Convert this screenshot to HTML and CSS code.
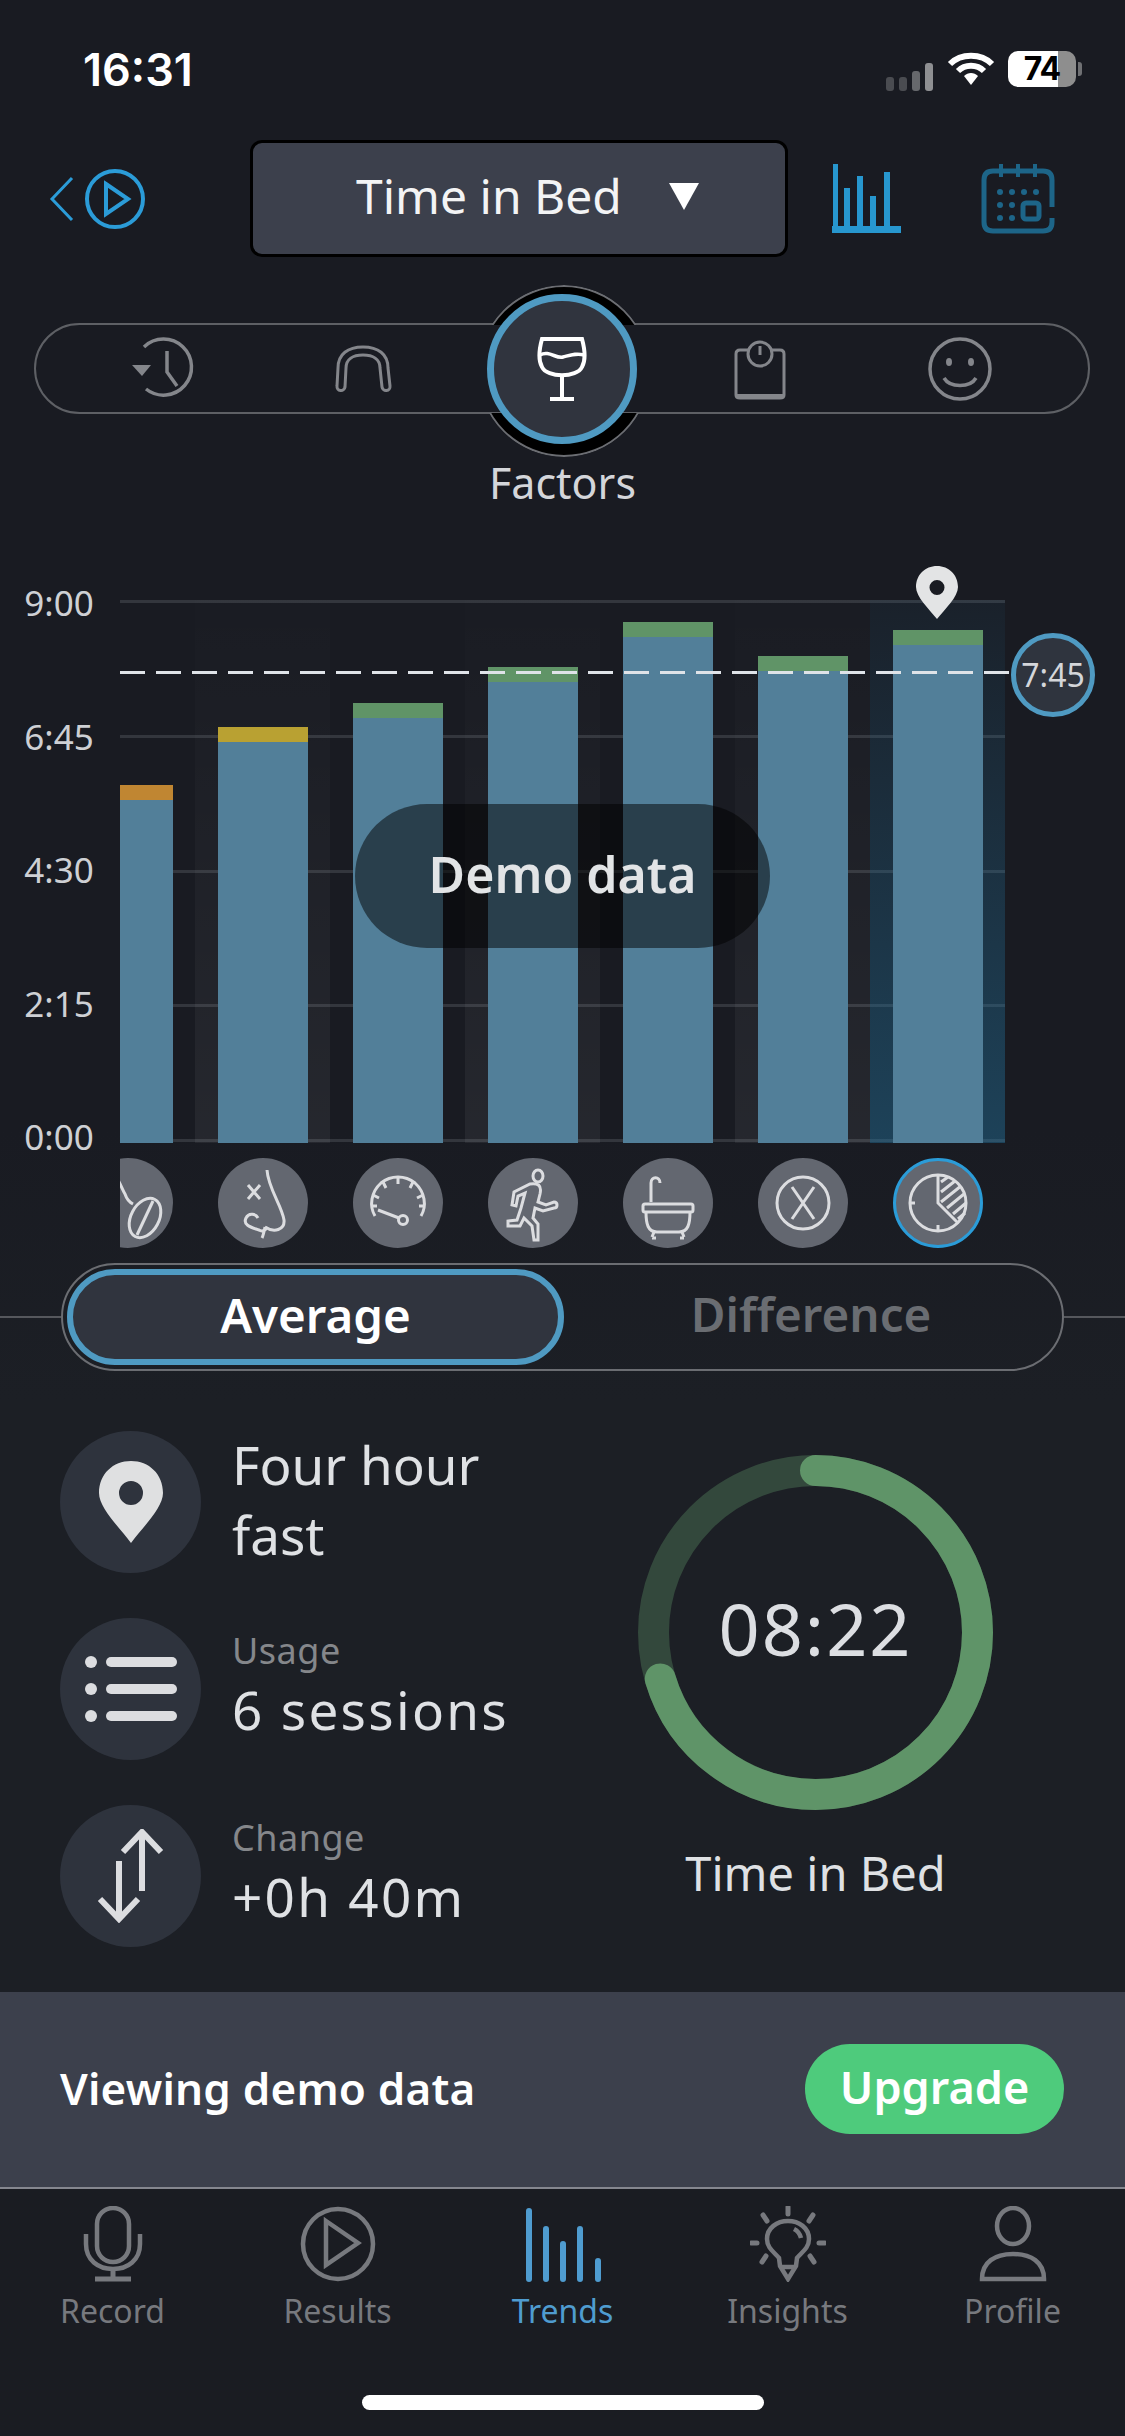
FILE: index.html
```html
<!DOCTYPE html>
<html lang="en">
<head>
  <meta charset="UTF-8" />
  <title>Trends - Time in Bed</title>
  <link rel="stylesheet" href="styles.css">
</head>
<body>
  <div class="status">
    <span class="clock">16:31</span>
    <div class="status-right">
      <div class="signal"><i></i><i></i><i></i><i></i></div>
      <svg class="wifi" width="48" height="36" viewBox="0 0 48 36"><path d="M3 13 C14 2 34 2 45 13 M11 20 C18 13 30 13 37 20" fill="none" stroke="#fff" stroke-width="6"/><path d="M17 25 C21 21 27 21 31 25 L24 34z" fill="#fff"/></svg>
      <div class="battery">74</div>
      <div class="nub"></div>
    </div>
  </div>

  <div class="topbar">
    <div class="back">
      <svg width="96" height="64" viewBox="0 0 96 64" fill="none" stroke="#2b9cd8" stroke-width="4"><path d="M23 11 L3 32 L23 53" stroke-width="3"/><circle cx="66" cy="32" r="28"/><path d="M57 17 L79 32 L57 47z"/></svg>
    </div>
    <div class="selector">Time in Bed<span class="caret"></span></div>
    <svg class="top-bars" width="70" height="70" viewBox="0 0 70 70" fill="#2797cf"><rect x="1" y="0" width="5" height="66"/><rect x="12" y="24" width="6" height="42"/><rect x="25" y="12" width="6" height="54"/><rect x="38" y="32" width="6" height="34"/><rect x="52" y="8" width="6" height="58"/><rect x="0" y="62" width="69" height="7"/></svg>
    <svg class="top-cal" width="74" height="72" viewBox="0 0 74 72" fill="none" stroke="#1d6588" stroke-width="5"><path d="M71 44 V17 Q71 8 62 8 H12 Q3 8 3 17 V59 Q3 68 12 68 H62 Q71 68 71 59 V55"/><path d="M20 1 V14 M37 1 V14 M54 1 V14" stroke-width="4"/><g fill="#1d6588" stroke="none"><circle cx="19" cy="29" r="3"/><circle cx="31" cy="29" r="3"/><circle cx="43" cy="29" r="3"/><circle cx="55" cy="29" r="3"/><circle cx="19" cy="42" r="3"/><circle cx="31" cy="42" r="3"/><circle cx="19" cy="55" r="3"/><circle cx="31" cy="55" r="3"/></g><rect x="42" y="40" width="16" height="16" rx="3" stroke-width="5"/></svg>
  </div>

  <div class="track">
    <div class="track-item item-history">
      <svg width="70" height="70" viewBox="0 0 70 70" fill="none" stroke="#84868b" stroke-width="3.5"><path d="M13 13 A28 28 0 1 1 15 55"/><path d="M36 17 V38 L46 52"/><path d="M1 31 H20 L11 42z" fill="#84868b" stroke="none"/></svg>
    </div>
    <div class="track-item item-guard">
      <svg width="60" height="50" viewBox="0 0 60 50" fill="none" stroke="#84868b" stroke-width="3"><path d="M4 42 L5 24 C5 10 15 3 30 3 C45 3 55 10 55 24 L57 42 A4 4 0 0 1 49 43 L47 24 C47 15 40 11 30 11 C20 11 13 15 13 24 L12 43 A4 4 0 0 1 4 42z"/></svg>
    </div>
    <div class="track-active">
      <div class="track-ring">
        <svg width="52" height="66" viewBox="0 0 52 66" fill="none" stroke="#fff" stroke-width="4"><path d="M6 3 H46 C49 14 50 24 46 31 C41 42 11 42 6 31 C2 24 3 14 6 3z"/><path d="M4 19 C13 14 20 23 27 21 C35 19 40 17 48 19" stroke-width="3.5"/><path d="M26 40 V62 M14 63 H38"/></svg>
      </div>
    </div>
    <div class="track-item item-scale">
      <svg width="54" height="62" viewBox="0 0 54 62" fill="none" stroke="#84868b" stroke-width="3"><path d="M16 12 H7 Q3 12 3 16 V57 Q3 60 7 60 H47 Q51 60 51 57 V16 Q51 12 47 12 H38"/><circle cx="27" cy="16" r="12"/><path d="M27 8 V17"/><path d="M3 58 H51" stroke-width="4"/></svg>
    </div>
    <div class="track-item item-mood">
      <svg width="66" height="66" viewBox="0 0 66 66" fill="none" stroke="#84868b" stroke-width="3.5"><circle cx="33" cy="33" r="30"/><ellipse cx="22" cy="26" rx="3" ry="4" fill="#84868b" stroke="none"/><ellipse cx="44" cy="26" rx="3" ry="4" fill="#84868b" stroke="none"/><path d="M17 42 C23 52 43 52 49 42"/></svg>
    </div>
  </div>
  <div class="track-label">Factors</div>

  <div class="chart">
    <div class="y-axis">
      <span>9:00</span><span>6:45</span><span>4:30</span><span>2:15</span><span>0:00</span>
    </div>
    <div class="plot">
      <div class="grid"><i></i><i></i><i></i><i></i><i></i></div>
      <div class="col col-first"><div class="bar" style="height:358px"><div class="cap cap-orange"></div></div></div>
      <div class="col col-shade"><div class="bar" style="height:416px"><div class="cap cap-yellow"></div></div></div>
      <div class="col"><div class="bar" style="height:440px"><div class="cap"></div></div></div>
      <div class="col col-shade"><div class="bar" style="height:476px"><div class="cap"></div></div></div>
      <div class="col"><div class="bar" style="height:521px"><div class="cap"></div></div></div>
      <div class="col col-shade"><div class="bar" style="height:487px"><div class="cap"></div></div></div>
      <div class="col col-selected"><div class="bar" style="height:513px"><div class="cap"></div></div></div>
    </div>
    <div class="avg-line"></div>
    <div class="avg-marker">7:45</div>
    <svg class="pin" width="44" height="54" viewBox="0 0 44 54"><path fill-rule="evenodd" d="M22 1 C34 1 43 10 43 22 C43 32 30 44 22 54 C14 44 1 32 1 22 C1 10 10 1 22 1z M22 15 A7.5 7.5 0 1 0 22 30 A7.5 7.5 0 1 0 22 15z" fill="#e3e4e5"/></svg>
    <div class="demo-pill">Demo data</div>
  </div>

  <div class="factor-row">
    <div class="factor-cell factor-first">
      <div class="factor">
        <svg width="90" height="90" viewBox="0 0 90 90" fill="none" stroke="#dcdde0" stroke-width="3"><path d="M26 14 C36 18 38 30 42 36 C44 42 46 44 50 46"/><ellipse cx="62" cy="60" rx="14" ry="21" transform="rotate(28 62 60)"/><path d="M54 77 L70 43"/></svg>
      </div>
    </div>
    <div class="factor-cell">
      <div class="factor">
        <svg width="90" height="90" viewBox="0 0 90 90" fill="none" stroke="#dcdde0" stroke-width="3"><path d="M49 12 C50 30 64 48 66 62 C67 72 56 75 47 69 C50 72 44 74 41 72 C36 70 24 68 28 60 C31 54 38 56 40 60 M47 69 C46 74 45 78 44 80"/><path d="M30 27 L42 41 M42 27 L30 41"/></svg>
      </div>
    </div>
    <div class="factor-cell">
      <div class="factor">
        <svg width="90" height="90" viewBox="0 0 90 90" fill="none" stroke="#dcdde0" stroke-width="3"><path d="M22 58 C16 48 18 34 28 25 C38 17 52 17 62 25 C72 34 74 48 68 58"/><path d="M45 19 V26 M30 24 L33 30 M60 24 L57 30 M20 37 L26 40 M70 37 L64 40 M18 48 L24 48 M72 48 L66 48 M25 52 L46 60"/><circle cx="50" cy="62" r="4.5"/></svg>
      </div>
    </div>
    <div class="factor-cell">
      <div class="factor">
        <svg width="90" height="90" viewBox="0 0 90 90" fill="none" stroke="#dcdde0" stroke-width="3"><ellipse cx="50" cy="18" rx="5" ry="6"/><path d="M42 26 C50 25 54 27 52 36 L50 44 L58 47 L66 44 C70 44 70 50 66 50 L55 53 L47 50 L45 60 L50 66 L50 82 L46 82 L44 68 L36 60 L32 68 L20 68 L20 63 L29 62 L33 50 L37 35 L30 38 L28 48 L24 47 L26 34z"/></svg>
      </div>
    </div>
    <div class="factor-cell">
      <div class="factor">
        <svg width="90" height="90" viewBox="0 0 90 90" fill="none" stroke="#dcdde0" stroke-width="3"><path d="M28 44 V25 C28 18 37 18 37 25"/><rect x="20" y="46" width="50" height="8" rx="2"/><path d="M23 54 C23 66 25 74 34 74 H56 C65 74 67 66 67 54"/><path d="M31 74 L29 79 M59 74 L61 79 M29 80 H33 M57 80 H61"/></svg>
      </div>
    </div>
    <div class="factor-cell">
      <div class="factor">
        <svg width="90" height="90" viewBox="0 0 90 90" fill="none" stroke="#dcdde0" stroke-width="3"><circle cx="45" cy="45" r="26"/><path d="M34 29 L56 61 M56 29 L34 61"/></svg>
      </div>
    </div>
    <div class="factor-cell">
      <div class="factor factor-on">
        <svg width="84" height="84" viewBox="0 0 84 84" fill="none" stroke="#dcdde0" stroke-width="3"><circle cx="42" cy="42" r="28"/><path d="M42 14 V42 L62 62"/><path d="M42 70 V64 M14 42 H19"/><path d="M45 21 L52 16 M45 31 L59 20 M45 41 L65 25 M51 47 L68 33 M57 53 L70 42 M62 58 L69 52" stroke-width="3"/></svg>
      </div>
    </div>
  </div>

  <div class="segment-row">
    <div class="rule"></div>
    <div class="segment">
      <div class="seg-on">Average</div>
      <div class="seg-off">Difference</div>
    </div>
    <div class="rule"></div>
  </div>

  <div class="stats">
    <div class="stat-list">
      <div class="stat">
        <div class="stat-icon">
          <svg width="66" height="84" viewBox="0 0 66 84"><path fill-rule="evenodd" d="M33 1 C51 1 65 14 65 33 C65 48 44 68 33 83 C22 68 1 48 1 33 C1 14 15 1 33 1z M33 21 A12 12 0 1 0 33 45 A12 12 0 1 0 33 21z" fill="#dfe0e1"/></svg>
        </div>
        <div class="stat-title">Four hour<br>fast</div>
      </div>
      <div class="stat">
        <div class="stat-icon">
          <svg width="92" height="72" viewBox="0 0 92 72" fill="#dcdde0"><circle cx="6" cy="9" r="6"/><circle cx="6" cy="36" r="6"/><circle cx="6" cy="63" r="6"/><rect x="21" y="4" width="71" height="10" rx="5"/><rect x="21" y="31" width="71" height="10" rx="5"/><rect x="21" y="58" width="71" height="10" rx="5"/></svg>
        </div>
        <div class="stat-text">
          <div class="stat-label">Usage</div>
          <div class="stat-value">6 sessions</div>
        </div>
      </div>
      <div class="stat">
        <div class="stat-icon">
          <svg width="70" height="94" viewBox="0 0 70 94" fill="none" stroke="#dcdde0" stroke-width="6"><path d="M46 62 V3 M27 23 L46 3 L65 23"/><path d="M23 32 V90 M4 70 L23 90 L42 70"/></svg>
        </div>
        <div class="stat-text">
          <div class="stat-label">Change</div>
          <div class="stat-value">+0h 40m</div>
        </div>
      </div>
    </div>
    <div class="ring-box">
      <div class="ring">
        <svg width="355" height="355" viewBox="0 0 355 355" fill="none" stroke-width="31"><circle cx="177.500" cy="177.500" r="162" stroke="#33483c"/><circle cx="177.500" cy="177.500" r="162" stroke="#5f9468" stroke-linecap="round" stroke-dasharray="716 1018" transform="rotate(-90 177.500 177.500)"/></svg>
        <div class="ring-value">08:22</div>
      </div>
      <div class="ring-label">Time in Bed</div>
    </div>
  </div>

  <div class="banner">
    <span class="banner-text">Viewing demo data</span>
    <div class="upgrade">Upgrade</div>
  </div>

  <div class="tabs">
    <div class="tab">
      <svg width="60" height="76" viewBox="0 0 60 76" fill="none" stroke="#77797e" stroke-width="4.5"><rect x="14" y="2" width="32" height="54" rx="16"/><path d="M3 28 V38 C3 54 15 63 30 63 C45 63 57 54 57 38 V28"/><path d="M30 63 V73 M12 73 H48" stroke-width="5"/></svg>
      <span>Record</span>
    </div>
    <div class="tab">
      <svg width="76" height="76" viewBox="0 0 76 76" fill="none" stroke="#77797e" stroke-width="4.5"><circle cx="38" cy="38" r="35"/><path d="M26 15 L58 37 L26 59z"/></svg>
      <span>Results</span>
    </div>
    <div class="tab tab-on">
      <svg width="76" height="76" viewBox="0 0 76 76" fill="#4f9cd0"><rect x="1" y="2" width="6" height="74" rx="3"/><rect x="18" y="20" width="6" height="56" rx="3"/><rect x="35" y="35" width="6" height="41" rx="3"/><rect x="52" y="20" width="6" height="56" rx="3"/><rect x="70" y="52" width="6" height="24" rx="3"/></svg>
      <span>Trends</span>
    </div>
    <div class="tab">
      <svg width="76" height="76" viewBox="0 0 76 76" fill="none" stroke="#77797e" stroke-width="4.500"><path d="M30 60 L29 52 C24 46 17 42 17 33 C17 22 27 15 38 15 C49 15 59 22 59 33 C59 42 52 46 47 52 L46 60 L38 73z"/><path d="M30 61 H46 M44 23 C48 25 50 28 51 32"/><path d="M38 1 V8 M13 9 L17 15 M63 9 L59 15 M1 37 H7 M69 37 H75 M12 56 L16 50 M64 56 L60 50" stroke-width="5" stroke-linecap="round"/></svg>
      <span>Insights</span>
    </div>
    <div class="tab">
      <svg width="68" height="76" viewBox="0 0 68 76" fill="none" stroke="#77797e" stroke-width="4.5"><ellipse cx="34" cy="20" rx="16" ry="18"/><path d="M3 73 C3 56 16 48 34 48 C52 48 65 56 65 73z"/></svg>
      <span>Profile</span>
    </div>
  </div>
  <div class="home-bar"></div>
</body>
</html>
```

FILE: styles.css
```css
* {
  box-sizing: border-box;
}

html, body {
  margin: 0;
  padding: 0;
}

body {
  width: 1125px;
  height: 2436px;
  overflow: hidden;
  background: linear-gradient(#191b22, #191b22 1130px, #1c1f25 1400px, #1c1f25 1992px, #1a1c22 2189px);
  font-family: "Noto Sans", Lato, sans-serif;
  color: #dcdee2;
}

/* status bar */
.status {
  height: 140px;
  display: flex;
  align-items: center;
  justify-content: space-between;
  padding: 0 43px 2px 83px;
}

.clock {
  font-family: Inter, sans-serif;
  font-size: 45px;
  font-weight: 600;
  color: #fff;
}

.status-right {
  display: flex;
  align-items: center;
}

.signal {
  display: flex;
  align-items: flex-end;
  gap: 5px;
  margin: 16px 14px 0 0;
}

.signal i {
  display: block;
  width: 8px;
  height: 14px;
  border-radius: 3px;
  background: #4a4c51;
}

.signal i:nth-child(3) {
  height: 20px;
  background: #66686c;
}

.signal i:nth-child(4) {
  height: 28px;
  background: #8e8f92;
}

.wifi {
  margin-right: 13px;
}

.battery {
  width: 68px;
  height: 36px;
  border-radius: 10px;
  background: linear-gradient(90deg, #fff 74%, #8e8e8e 74%);
  color: #000;
  font-family: Inter, sans-serif;
  font-size: 32px;
  font-weight: 700;
  line-height: 36px;
  text-align: center;
  letter-spacing: -1px;
}

.nub {
  width: 4px;
  height: 14px;
  margin-left: 2px;
  border-radius: 0 3px 3px 0;
  background: #6f7073;
}

/* top bar */
.topbar {
  height: 117px;
  display: flex;
  align-items: center;
  padding-left: 49px;
}

.back {
  width: 201px;
  display: flex;
}

.selector {
  width: 538px;
  height: 117px;
  border: 3px solid #000;
  border-radius: 12px;
  background: #3c404c;
  color: #f3f4f5;
  font-size: 48px;
  display: flex;
  align-items: center;
  justify-content: space-between;
  padding: 0 86px 6px 103px;
}

.caret {
  width: 0;
  height: 0;
  margin-top: 2px;
  border-left: 15px solid transparent;
  border-right: 15px solid transparent;
  border-top: 27px solid #fff;
}

.top-bars {
  margin-left: 44px;
}

.top-cal {
  margin-left: 79px;
}

/* factor picker */
.track {
  height: 91px;
  margin: 66px 35px 0 34px;
  padding-left: 95px;
  border: 2px solid #5e6065;
  border-radius: 46px;
  display: flex;
  align-items: center;
}

.track-item {
  display: flex;
  justify-content: center;
}

.item-history {
  width: 70px;
}

.item-guard {
  width: 60px;
  margin-left: 132px;
}

.item-scale {
  width: 54px;
  margin-left: 87px;
}

.item-mood {
  width: 66px;
  margin-left: 140px;
}

.track-active {
  position: relative;
  width: 168px;
  height: 168px;
  margin-left: 85px;
  display: flex;
  align-items: center;
  justify-content: center;
}

/* black caps of the selected circle, only seen outside the track */
.track-active::before {
  content: "";
  position: absolute;
  top: 0;
  left: 0;
  width: 168px;
  height: 168px;
  border: 2px solid #6b6d72;
  border-radius: 50%;
  background: #000;
  -webkit-mask-image: linear-gradient(#000 40px, transparent 40px, transparent 128px, #000 128px);
  mask-image: linear-gradient(#000 40px, transparent 40px, transparent 128px, #000 128px);
}

.track-ring {
  position: relative;
  width: 150px;
  height: 150px;
  border: 7px solid #4f9ac2;
  border-radius: 50%;
  background: #30343e;
  display: flex;
  align-items: center;
  justify-content: center;
}

.track-label {
  margin-top: 45px;
  height: 50px;
  line-height: 48px;
  font-size: 43px;
  text-align: center;
  color: #d4d6da;
}

/* chart */
.chart {
  position: relative;
  margin-top: 91px;
  display: flex;
}

.y-axis {
  width: 120px;
  height: 568px;
  margin: -14px 0 -11px;
  padding-right: 2px;
  display: flex;
  flex-direction: column;
  justify-content: space-between;
  font-size: 35px;
  line-height: 34px;
  text-align: center;
  color: #ced0d4;
}

.plot {
  position: relative;
  width: 885px;
  height: 543px;
  display: flex;
}

.grid {
  position: absolute;
  top: 0;
  left: 0;
  right: 0;
  bottom: 1px;
  display: flex;
  flex-direction: column;
  justify-content: space-between;
}

.grid i {
  display: block;
  height: 3px;
  background: #33363d;
}

.col {
  position: relative;
  width: 135px;
  display: flex;
  align-items: flex-end;
  justify-content: center;
}

.col-first {
  width: 75px;
  justify-content: flex-start;
}

.col-first .bar {
  width: 53px;
}

.col-shade {
  background: linear-gradient(rgba(255, 255, 255, 0.005), rgba(255, 255, 255, 0.055));
}

.col-selected {
  background: linear-gradient(rgba(40, 130, 180, 0.06), rgba(35, 120, 165, 0.42));
}

.bar {
  width: 90px;
  background: #527f99;
}

.cap {
  height: 15px;
  background: #609467;
}

.cap-orange {
  background: #c08632;
}

.cap-yellow {
  background: #b9a132;
}

.avg-line {
  position: absolute;
  top: 71px;
  left: 120px;
  width: 890px;
  height: 3px;
  background: repeating-linear-gradient(90deg, #dfe3e8 0, #dfe3e8 25px, transparent 25px, transparent 36px);
}

.avg-marker {
  position: absolute;
  top: 33px;
  left: 1011px;
  width: 84px;
  height: 84px;
  border: 5px solid #4f9ac2;
  border-radius: 50%;
  background: #2f343e;
  font-size: 32px;
  line-height: 74px;
  text-align: center;
  color: #d4d6da;
}

.pin {
  position: absolute;
  top: -35px;
  left: 915px;
}

.demo-pill {
  position: absolute;
  top: 204px;
  left: 355px;
  width: 415px;
  height: 144px;
  border-radius: 72px;
  background: rgba(0, 0, 0, 0.5);
  font-size: 50px;
  font-weight: 600;
  line-height: 140px;
  text-align: center;
  color: #e2e4e6;
}

/* factor icons under the chart */
.factor-row {
  margin: 15px 0 0 120px;
  display: flex;
}

.factor-cell {
  width: 135px;
  display: flex;
  justify-content: center;
}

.factor-first {
  width: 53px;
  margin-right: 22px;
  overflow: hidden;
  justify-content: flex-end;
}

.factor {
  width: 90px;
  height: 90px;
  flex: none;
  border-radius: 50%;
  background: #636770;
}

.factor svg {
  display: block;
}

.factor-on {
  border: 3px solid #2b9cd8;
}

/* average / difference */
.segment-row {
  margin-top: 15px;
  display: flex;
  align-items: center;
}

.rule {
  flex: 1;
  height: 2px;
  background: #55575c;
}

.segment {
  width: 1003px;
  height: 108px;
  padding: 4px;
  border: 2px solid #6b6d72;
  border-radius: 54px;
  display: flex;
  font-size: 47.500px;
  font-weight: 600;
}

.seg-on {
  width: 497px;
  border: 6px solid #4f9ac2;
  border-radius: 48px;
  background: #30343e;
  color: #fff;
  text-align: center;
  line-height: 80px;
}

.seg-off {
  flex: 1;
  text-align: center;
  line-height: 90px;
  color: #6a6d72;
}

/* stats */
.stats {
  margin-top: 60px;
  padding-left: 60px;
  display: flex;
}

.stat-list {
  width: 578px;
  display: flex;
  flex-direction: column;
  gap: 45px;
}

.stat {
  height: 142px;
  display: flex;
  align-items: center;
  gap: 31px;
}

.stat-icon {
  width: 141px;
  height: 142px;
  flex: none;
  border-radius: 50%;
  background: #2e333d;
  display: flex;
  align-items: center;
  justify-content: center;
}

.stat-title {
  margin-top: -5px;
  font-size: 53px;
  line-height: 70px;
  color: #dfe1e4;
}

.stat-label {
  margin-top: -7px;
  font-size: 36px;
  letter-spacing: 0.5px;
  line-height: 44px;
  color: #85878b;
}

.stat-value {
  margin-top: 4px;
  font-size: 53px;
  letter-spacing: 2.3px;
  line-height: 66px;
  color: #dfe1e4;
}

.ring-box {
  width: 355px;
  padding-top: 24px;
  display: flex;
  flex-direction: column;
  align-items: center;
}

.ring {
  position: relative;
  width: 355px;
  height: 355px;
}

.ring svg {
  display: block;
}

.ring-value {
  position: absolute;
  top: -4px;
  left: 0;
  right: 0;
  font-size: 72px;
  letter-spacing: 2px;
  line-height: 355px;
  text-align: center;
  color: #dcdee2;
}

.ring-label {
  margin-top: 35px;
  font-size: 47px;
  line-height: 56px;
  color: #dfe1e4;
}

/* demo banner */
.banner {
  height: 197px;
  margin-top: 45px;
  padding: 0 61px 2px 60px;
  border-bottom: 2px solid #85878f;
  background: #3c404c;
  display: flex;
  align-items: center;
  justify-content: space-between;
}

.banner-text {
  margin-top: -2px;
  font-size: 44px;
  font-weight: 600;
  letter-spacing: 0.2px;
  color: #fff;
}

.upgrade {
  width: 259px;
  height: 90px;
  border-radius: 45px;
  background: #4ecb7c;
  color: #fff;
  font-size: 45px;
  font-weight: 600;
  line-height: 86px;
  text-align: center;
}

/* bottom tabs */
.tabs {
  padding-top: 17px;
  display: grid;
  grid-template-columns: repeat(5, 225px);
}

.tab {
  display: flex;
  flex-direction: column;
  align-items: center;
  font-size: 32px;
  line-height: 40px;
  color: #77797e;
}

.tab span {
  margin-top: 9px;
}

.tab-on {
  color: #4f9cd0;
}

.home-bar {
  width: 402px;
  height: 15px;
  margin: 64px auto 0;
  border-radius: 8px;
  background: #fff;
}
```
